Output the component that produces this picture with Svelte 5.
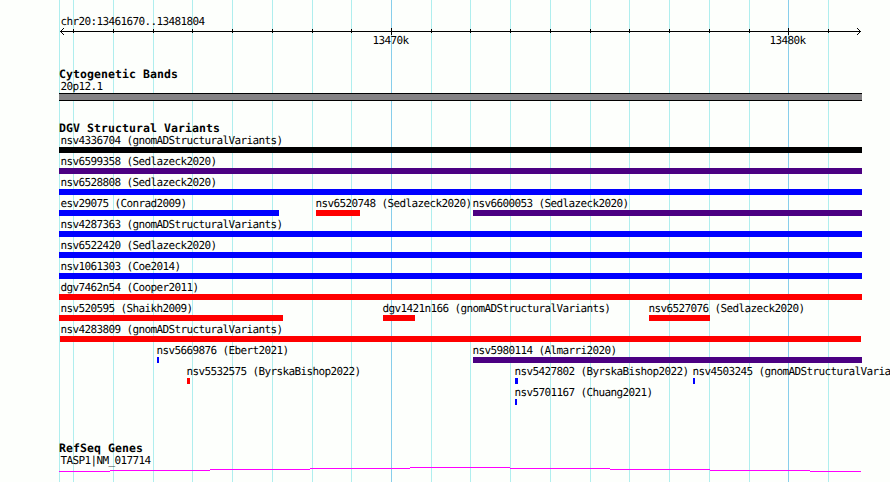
<script>
  const START = 59;
  const minor = [59, 73, 113, 153, 192, 232, 272, 312, 351, 431, 470, 510, 550, 590, 629, 669, 709, 749, 828];
  const major = [391, 788];

  const BLUE = '#0000ff';
  const RED = '#ff0000';
  const INDIGO = '#4b0082';

  // name, label x, bar start, bar end, colour
  const rows = [
    [['nsv4336704 (gnomADStructuralVariants)', 60, 59, 862, '#000']],
    [['nsv6599358 (Sedlazeck2020)', 60, 59, 862, INDIGO]],
    [['nsv6528808 (Sedlazeck2020)', 60, 59, 862, BLUE]],
    [
      ['esv29075 (Conrad2009)', 60, 59, 279, BLUE],
      ['nsv6520748 (Sedlazeck2020)', 315, 316, 360, RED],
      ['nsv6600053 (Sedlazeck2020)', 472, 473, 862, INDIGO]
    ],
    [['nsv4287363 (gnomADStructuralVariants)', 60, 59, 862, BLUE]],
    [['nsv6522420 (Sedlazeck2020)', 60, 59, 862, BLUE]],
    [['nsv1061303 (Coe2014)', 60, 59, 862, BLUE]],
    [['dgv7462n54 (Cooper2011)', 60, 59, 862, RED]],
    [
      ['nsv520595 (Shaikh2009)', 60, 59, 283, RED],
      ['dgv1421n166 (gnomADStructuralVariants)', 382, 383, 415, RED],
      ['nsv6527076 (Sedlazeck2020)', 648, 649, 710, RED]
    ],
    [['nsv4283809 (gnomADStructuralVariants)', 60, 60, 861, RED]],
    [
      ['nsv5669876 (Ebert2021)', 156, 157, 159, BLUE],
      ['nsv5980114 (Almarri2020)', 472, 473, 862, INDIGO]
    ],
    [
      ['nsv5532575 (ByrskaBishop2022)', 186, 187, 190, RED],
      ['nsv5427802 (ByrskaBishop2022)', 514, 515, 518, BLUE],
      ['nsv4503245 (gnomADStructuralVaria', 692, 693, 695, BLUE]
    ],
    [['nsv5701167 (Chuang2021)', 514, 515, 517, BLUE]]
  ];

  // stepped gene line: start, end, vertical offset
  const steps = [
    [59, 110, 4], [110, 210, 3], [210, 310, 2], [310, 410, 1], [410, 510, 0],
    [510, 610, 1], [610, 710, 2], [710, 810, 3], [810, 861, 4]
  ];
</script>

<main class="browser">
  <svg class="gridlines" width="890" height="482" shape-rendering="crispEdges" aria-hidden="true">
    {#each minor as x}<rect {x} y="0" width="1" height="482" fill="#afeeee" />{/each}
    {#each major as x}<rect {x} y="0" width="1" height="482" fill="#87ceeb" />{/each}
  </svg>

  <header class="scale">
    <div class="label region">chr20:13461670..13481804</div>
    <svg class="axis" width="890" height="7" shape-rendering="crispEdges" aria-hidden="true">
      <rect x="60" y="3" width="801" height="1" />
      {#each minor.slice(1) as x}<rect {x} y="1" width="1" height="4" />{/each}
      {#each major as x}<rect {x} y="0" width="1" height="7" />{/each}
      {#each [1, 2, 3] as d}
        <rect x={60 + d} y={3 - d} width="1" height="1" />
        <rect x={60 + d} y={3 + d} width="1" height="1" />
        <rect x={860 - d} y={3 - d} width="1" height="1" />
        <rect x={860 - d} y={3 + d} width="1" height="1" />
      {/each}
    </svg>
    <div class="ticks">
      <span class="label">13470k</span>
      <span class="label">13480k</span>
    </div>
  </header>

  <section class="bands">
    <h2>Cytogenetic Bands</h2>
    <div class="label">20p12.1</div>
    <div class="band"></div>
  </section>

  <section class="variants">
    <h2>DGV Structural Variants</h2>
    {#each rows as row}
      <div class="row">
        {#each row as [name, x, from, to, colour]}
          <div class="feature">
            <div class="label" style="margin-left: {x - START}px">{name}</div>
            <div class="bar" style="margin-left: {from - START}px; width: {to - from}px; background: {colour}"></div>
          </div>
        {/each}
      </div>
    {/each}
  </section>

  <section class="genes">
    <h2>RefSeq Genes</h2>
    <div class="label">TASP1|NM_017714</div>
    <svg class="gene" width="803" height="5" shape-rendering="crispEdges" aria-hidden="true">
      {#each steps as [from, to, y]}<rect x={from - START} {y} width={to - from} height="1" fill="#ff00ff" />{/each}
    </svg>
  </section>
</main>

<style>
  :global(body) {
    margin: 0;
    background: #fdfffc;
  }
  .browser {
    position: relative;
    box-sizing: border-box;
    width: 890px;
    height: 482px;
    padding-top: 15px;
    overflow: hidden;
    background: #fdfffc;
    color: #000;
    font: 11px/13px 'DejaVu Sans Mono', 'Liberation Mono', monospace;
    text-rendering: geometricPrecision;
  }
  .gridlines {
    position: absolute;
    inset: 0;
  }
  header,
  section {
    position: relative;
  }
  svg {
    display: block;
  }
  .label {
    height: 13px;
    letter-spacing: -0.623px;
    text-indent: 0.4px;
    white-space: pre;
  }
  .region {
    padding-left: 60px;
  }
  .ticks {
    display: flex;
    gap: 361px;
    padding-left: 372px;
    margin-top: -1px;
  }
  .ticks .label {
    width: 36px;
  }
  section {
    padding-left: 59px;
  }
  section > .label {
    padding-left: 1px;
  }
  h2 {
    height: 12px;
    margin: 0;
    font-size: 11.5px;
    line-height: 13px;
    font-weight: 700;
    letter-spacing: 0.076px;
    white-space: pre;
  }
  .bands {
    margin-top: 21px;
  }
  .band {
    box-sizing: border-box;
    width: 803px;
    height: 8px;
    border: solid #000;
    border-width: 1px 0;
    background: #848284;
  }
  .variants {
    margin-top: 21px;
  }
  .row {
    display: grid;
    grid-template-columns: 831px;
    height: 21px;
  }
  .feature {
    grid-area: 1 / 1;
  }
  .bar {
    height: 6px;
  }
  .genes {
    margin-top: 35px;
  }
</style>
